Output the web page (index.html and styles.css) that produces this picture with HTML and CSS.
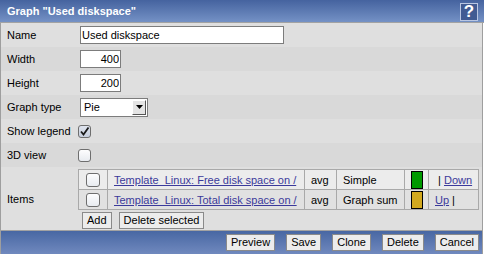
FILE: index.html
```html
<!DOCTYPE html>
<html>
<head>
<meta charset="utf-8">
<link rel="stylesheet" href="styles.css">
</head>
<body>
<div class="dlg">
  <div class="hdr">
    <span class="title">Graph "Used diskspace"</span>
    <span class="help">?</span>
  </div>
  <div class="form">
    <div class="row l">
      <div class="lbl">Name</div>
      <div class="val"><input class="txt name" type="text" value="Used diskspace"></div>
    </div>
    <div class="row d">
      <div class="lbl">Width</div>
      <div class="val"><input class="txt num" type="text" value="400"></div>
    </div>
    <div class="row l">
      <div class="lbl">Height</div>
      <div class="val"><input class="txt num" type="text" value="200"></div>
    </div>
    <div class="row d">
      <div class="lbl">Graph type</div>
      <div class="val">
        <span class="select">
          <span class="sel-text">Pie</span>
          <span class="sel-btn"><svg width="7" height="4" viewBox="0 0 7 4"><path d="M0 0H7L3.5 4Z" fill="#000"/></svg></span>
        </span>
      </div>
    </div>
    <div class="row l">
      <div class="lbl">Show legend</div>
      <div class="val"><span class="cb checked"><svg width="11" height="11" viewBox="0 0 11 11"><path d="M2 5.5L4.5 8.5L9.5 1.5" fill="none" stroke="#1a1a1a" stroke-width="1.8"/></svg></span></div>
    </div>
    <div class="row d">
      <div class="lbl">3D view</div>
      <div class="val"><span class="cb"></span></div>
    </div>
    <div class="row l items">
      <div class="lbl">Items</div>
      <div class="val">
        <table class="itbl">
          <colgroup><col class="c1"><col class="c2"><col class="c3"><col class="c4"><col class="c5"><col class="c6"></colgroup>
          <tr class="r1">
            <td class="ck"><span class="cb big"></span></td>
            <td class="nm"><a href="#">Template_Linux: Free disk space on /</a></td>
            <td>avg</td>
            <td>Simple</td>
            <td class="sw"><span class="swatch green"></span></td>
            <td class="mv"> | <a href="#">Down</a></td>
          </tr>
          <tr class="r2">
            <td class="ck"><span class="cb big"></span></td>
            <td class="nm"><a href="#">Template_Linux: Total disk space on /</a></td>
            <td>avg</td>
            <td>Graph sum</td>
            <td class="sw"><span class="swatch yellow"></span></td>
            <td class="mv"><a href="#">Up</a> |</td>
          </tr>
        </table>
        <div class="ibtns">
          <button class="btn">Add</button>
          <button class="btn">Delete selected</button>
        </div>
      </div>
    </div>
  </div>
  <div class="ftr">
    <button class="btn">Preview</button>
    <button class="btn">Save</button>
    <button class="btn">Clone</button>
    <button class="btn">Delete</button>
    <button class="btn">Cancel</button>
  </div>
</div>
</body>
</html>
```
FILE: styles.css
```css
* { box-sizing: border-box; }
body {
  margin: 0;
  background: #ffffff;
  font-family: "Liberation Sans", Arial, sans-serif;
  font-size: 11px;
  color: #000;
}
.dlg { width: 484px; }
.hdr {
  height: 23px;
  border-bottom: 1px solid #a2a2a2;
  background: linear-gradient(#45639f, #7491c5);
  display: flex;
  align-items: center;
  justify-content: space-between;
  padding: 0 6px 0 7px;
}
.title { color: #fff; font-weight: bold; font-size: 11px; }
.help {
  width: 18px;
  height: 18px;
  border: 1px solid #b9c6e2;
  background: #415b93;
  color: #fff;
  font-weight: bold;
  font-size: 17px;
  line-height: 16px;
  text-align: center;
  margin-top: 1px;
}
.form {
  width: 483px;
  border-left: 1px solid #9e9e9e;
  border-right: 1px solid #9e9e9e;
}
.row { display: flex; align-items: center; height: 24px; }
.row.l { background: #dfdfdf; }
.row.d { background: #d9d9d9; }
.row.items { height: 63px; }
.lbl { width: 77px; padding-left: 6px; flex: none; }
.val { display: flex; flex-direction: column; align-items: flex-start; }
.txt {
  margin: 0 0 0 2px;
  height: 18px;
  border: 1px solid #7c7c7c;
  background: #fff;
  font-family: inherit;
  font-size: 11px;
  padding: 0 1px;
  color: #000;
}
.name { width: 204px; }
.num { width: 41px; text-align: right; }
.select {
  margin-left: 2px;
  width: 68px;
  height: 19px;
  border: 1px solid #7c7c7c;
  background: #fff;
  display: flex;
  align-items: center;
  justify-content: space-between;
  padding: 1px;
}
.sel-text { padding-left: 2px; }
.sel-btn {
  width: 14px;
  height: 15px;
  background: #e4e4e4;
  border: 1px solid;
  border-color: #fff #555 #555 #fff;
  display: flex;
  align-items: center;
  justify-content: center;
}
.cb {
  display: inline-flex;
  align-items: center;
  justify-content: center;
  width: 13px;
  height: 13px;
  border: 1px solid #6e6e6e;
  border-radius: 3px;
  background: linear-gradient(#fdfdfe, #e8ebf0);
}
.cb.checked { background: linear-gradient(#dfe4ee, #c6cedd); }
.cb.big { width: 14px; height: 14px; }
.itbl {
  margin-top: 1px;
  border-collapse: collapse;
  table-layout: fixed;
  width: 400px;
}
.itbl td {
  border: 1px solid #a9a9a9;
  height: 20px;
  padding: 0 6px;
  white-space: pre;
  overflow: hidden;
}
.r1 td { background: #ececec; }
.r2 td { background: #e1e1e1; }
.c1 { width: 29px; }
.c2 { width: 197px; }
.c3 { width: 32px; }
.c4 { width: 68px; }
.c5 { width: 24px; }
.c6 { width: 50px; }
.itbl td.ck { padding: 0; text-align: center; }
.itbl td.ck .cb { vertical-align: middle; }
.itbl td.sw { padding: 0; text-align: center; }
.swatch {
  display: inline-block;
  width: 12px;
  height: 18px;
  border: 1px solid #000;
  vertical-align: middle;
}
.green { background: #009a00; }
.yellow { background: #d2a91f; }
.itbl a { color: #3b3a9b; text-decoration: underline; }
.ibtns { display: flex; gap: 7px; margin: 2px 0 0 4px; }
.btn {
  height: 17px;
  padding: 0 4px;
  border: 1px solid #8a8a8a;
  background: #ececec;
  font-family: inherit;
  font-size: 11px;
  color: #000;
  line-height: 15px;
  margin: 0;
}
.ftr {
  width: 483px;
  height: 24px;
  border-left: 1px solid #9e9e9e;
  border-right: 1px solid #9e9e9e;
  border-top: 1px solid #a2a2a2;
  background: linear-gradient(#4867a3, #7089be);
  display: flex;
  justify-content: flex-end;
  align-items: center;
  gap: 11px;
  padding-right: 3px;
}
```
